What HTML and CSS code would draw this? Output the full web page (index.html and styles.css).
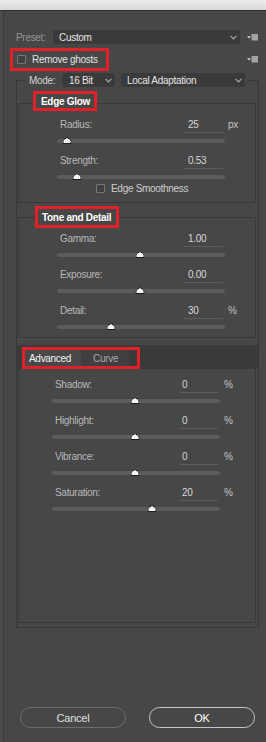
FILE: index.html
```html
<!DOCTYPE html>
<html lang="en">
<head>
<meta charset="utf-8">
<title>HDR Toning</title>
<link rel="stylesheet" href="styles.css">
</head>
<body>
<div class="titlebar"></div>
<div class="dialog">
  <div class="row preset-row">
    <span class="preset-label">Preset:</span>
    <div class="select select-preset"><span>Custom</span><svg class="chev" width="7" height="5" viewBox="0 0 7 5"><polyline points="0.6,0.8 3.5,3.8 6.4,0.8"/></svg></div>
    <svg class="menu-icon" width="11" height="7" viewBox="0 0 11 7"><polygon class="mi-tri" points="0,2.2 4,2.2 2,4.6"/><rect class="mi-sq" x="4.5" y="0" width="6.5" height="6.5"/></svg>
  </div>

  <div class="row ghost-row">
    <div class="mark ghost-mark"><span class="check"></span><span class="ghost-text">Remove ghosts</span></div>
    <svg class="menu-icon" width="11" height="7" viewBox="0 0 11 7"><polygon class="mi-tri" points="0,2.2 4,2.2 2,4.6"/><rect class="mi-sq" x="4.5" y="0" width="6.5" height="6.5"/></svg>
  </div>

  <div class="method-box">
    <div class="mode-row">
      <span class="mode-label">Mode:</span>
      <div class="select select-bit"><span>16 Bit</span><svg class="chev" width="7" height="5" viewBox="0 0 7 5"><polyline points="0.6,0.8 3.5,3.8 6.4,0.8"/></svg></div>
      <div class="select select-method"><span>Local Adaptation</span><svg class="chev" width="7" height="5" viewBox="0 0 7 5"><polyline points="0.6,0.8 3.5,3.8 6.4,0.8"/></svg></div>
    </div>

    <div class="group edge-group">
      <div class="mark group-title edge-title">Edge Glow</div>
      <div class="param">
        <div class="line"><span class="lbl">Radius:</span><span class="val">25</span><span class="unit">px</span></div>
        <div class="track"><svg class="thumb" style="left:6%" width="9" height="7" viewBox="0 0 9 7"><path d="M0.5 6.5 V4.3 Q0.5 3.2 1.8 2.3 L4.5 0.5 L7.2 2.3 Q8.5 3.2 8.5 4.3 V6.5 Z"/></svg></div>
      </div>
      <div class="param param-last">
        <div class="line"><span class="lbl">Strength:</span><span class="val">0.53</span></div>
        <div class="track"><svg class="thumb" style="left:12%" width="9" height="7" viewBox="0 0 9 7"><path d="M0.5 6.5 V4.3 Q0.5 3.2 1.8 2.3 L4.5 0.5 L7.2 2.3 Q8.5 3.2 8.5 4.3 V6.5 Z"/></svg></div>
      </div>
      <div class="smooth-row"><span class="check"></span><span class="smooth-text">Edge Smoothness</span></div>
    </div>

    <div class="group tone-group">
      <div class="mark group-title tone-title">Tone and Detail</div>
      <div class="param">
        <div class="line"><span class="lbl">Gamma:</span><span class="val">1.00</span></div>
        <div class="track"><svg class="thumb" style="left:49.4%" width="9" height="7" viewBox="0 0 9 7"><path d="M0.5 6.5 V4.3 Q0.5 3.2 1.8 2.3 L4.5 0.5 L7.2 2.3 Q8.5 3.2 8.5 4.3 V6.5 Z"/></svg></div>
      </div>
      <div class="param">
        <div class="line"><span class="lbl">Exposure:</span><span class="val">0.00</span></div>
        <div class="track"><svg class="thumb" style="left:49.4%" width="9" height="7" viewBox="0 0 9 7"><path d="M0.5 6.5 V4.3 Q0.5 3.2 1.8 2.3 L4.5 0.5 L7.2 2.3 Q8.5 3.2 8.5 4.3 V6.5 Z"/></svg></div>
      </div>
      <div class="param param-end">
        <div class="line"><span class="lbl">Detail:</span><span class="val">30</span><span class="unit">%</span></div>
        <div class="track"><svg class="thumb" style="left:32%" width="9" height="7" viewBox="0 0 9 7"><path d="M0.5 6.5 V4.3 Q0.5 3.2 1.8 2.3 L4.5 0.5 L7.2 2.3 Q8.5 3.2 8.5 4.3 V6.5 Z"/></svg></div>
      </div>
    </div>

    <div class="tabbar">
      <div class="mark tabs"><span class="tab tab-active">Advanced</span><span class="tab tab-curve">Curve</span></div>
    </div>
    <div class="tabpanel">
      <div class="param adv">
        <div class="line"><span class="lbl">Shadow:</span><span class="val">0</span><span class="unit">%</span></div>
        <div class="track"><svg class="thumb" style="left:49.4%" width="9" height="7" viewBox="0 0 9 7"><path d="M0.5 6.5 V4.3 Q0.5 3.2 1.8 2.3 L4.5 0.5 L7.2 2.3 Q8.5 3.2 8.5 4.3 V6.5 Z"/></svg></div>
      </div>
      <div class="param adv">
        <div class="line"><span class="lbl">Highlight:</span><span class="val">0</span><span class="unit">%</span></div>
        <div class="track"><svg class="thumb" style="left:49.4%" width="9" height="7" viewBox="0 0 9 7"><path d="M0.5 6.5 V4.3 Q0.5 3.2 1.8 2.3 L4.5 0.5 L7.2 2.3 Q8.5 3.2 8.5 4.3 V6.5 Z"/></svg></div>
      </div>
      <div class="param adv">
        <div class="line"><span class="lbl">Vibrance:</span><span class="val">0</span><span class="unit">%</span></div>
        <div class="track"><svg class="thumb" style="left:49.4%" width="9" height="7" viewBox="0 0 9 7"><path d="M0.5 6.5 V4.3 Q0.5 3.2 1.8 2.3 L4.5 0.5 L7.2 2.3 Q8.5 3.2 8.5 4.3 V6.5 Z"/></svg></div>
      </div>
      <div class="param adv">
        <div class="line"><span class="lbl">Saturation:</span><span class="val">20</span><span class="unit">%</span></div>
        <div class="track"><svg class="thumb" style="left:59.5%" width="9" height="7" viewBox="0 0 9 7"><path d="M0.5 6.5 V4.3 Q0.5 3.2 1.8 2.3 L4.5 0.5 L7.2 2.3 Q8.5 3.2 8.5 4.3 V6.5 Z"/></svg></div>
      </div>
    </div>
  </div>

  <div class="buttons">
    <button class="btn btn-cancel">Cancel</button>
    <button class="btn btn-ok">OK</button>
  </div>
</div>
</body>
</html>
```

FILE: styles.css
```css
* { box-sizing: border-box; }
html, body { margin: 0; padding: 0; }
body {
  width: 266px;
  height: 742px;
  overflow: hidden;
  background: linear-gradient(to right, #4b4b4b 0, #4b4b4b 3px, #383838 3px, #383838 4px, #474747 4px);
  font-family: "Liberation Sans", Arial, sans-serif;
  font-size: 10px;
  letter-spacing: -0.3px;
  color: #bcbcbc;
}

.titlebar {
  height: 11px;
  background: linear-gradient(#ececec, #dadada);
  border-bottom: 1px solid #2c2c2c;
}

.dialog { display: block; }

.row { display: flex; align-items: center; }

.mark {
  border: 3px solid #e3202a;
  background: #474747;
}

/* Preset */
.preset-row { margin-top: 19px; height: 14px; padding-left: 16px; }
.preset-label { width: 37px; color: #959595; }
.select {
  display: flex;
  align-items: center;
  justify-content: space-between;
  height: 14px;
  background: #3a3a3a;
  border-radius: 2px;
  color: #e4e4e4;
  padding: 0 3px 0 6px;
}
.select-preset { width: 187px; }
.chev { display: block; }
.chev polyline { fill: none; stroke: #a9a9a9; stroke-width: 1.2; }

.menu-icon { display: block; margin-left: auto; margin-right: 8px; }
.preset-row .menu-icon { margin-left: 7px; }
.mi-tri { fill: #d8d8d8; }
.mi-sq { fill: #a3a3a3; }

/* Remove ghosts */
.ghost-row { margin-top: 4px; }
.ghost-mark {
  display: flex;
  align-items: center;
  margin-left: 10px;
  width: 99px;
  height: 23px;
  padding-left: 4px;
}
.check {
  display: block;
  width: 9px;
  height: 9px;
  border: 1px solid #777;
  border-radius: 1px;
  background: #404040;
  flex: none;
}
.ghost-text { margin-left: 6px; color: #e2e2e2; font-size: 10px; }

/* Method box */
.method-box {
  margin-top: 9px;
  margin-left: 16px;
  width: 243px;
  border: 1px solid #383838;
  padding-bottom: 4px;
}
.mode-row {
  display: flex;
  align-items: center;
  margin-top: -8px;
  margin-left: 8px;
  width: 224px;
  height: 14px;
  background: #474747;
}
.mode-label { width: 37px; padding-left: 4px; color: #d2d2d2; }
.select-bit { width: 53px; padding-left: 7px; }
.select-method { width: 124px; margin-left: 6px; }

/* Groups */
.group {
  margin-left: 1px;
  width: 238px;
  border: 1px solid #393939;
}
.edge-group { margin-top: 16px; padding-bottom: 7px; }
.tone-group { margin-top: 14px; }

.group-title {
  display: flex;
  align-items: center;
  color: #ffffff;
  font-weight: bold;
  font-size: 10px;
}
.edge-title { margin-top: -13px; margin-left: 14px; width: 64px; height: 20px; padding-left: 5px; margin-bottom: 7px; }
.tone-title { margin-top: -12px; margin-left: 16px; width: 84px; height: 22px; padding-left: 4px; margin-bottom: 4px; }

/* Params */
.line { display: flex; align-items: flex-start; height: 15px; margin-left: 41px; line-height: 14px; }
.lbl { width: 124px; color: #b8b8b8; }
.val {
  width: 39px;
  height: 15px;
  border-bottom: 1px solid #5c5c5c;
  padding-left: 4px;
  color: #d6d6d6;
}
.unit { margin-left: 5px; color: #c4c4c4; }

.track {
  position: relative;
  margin: 6px 0 11px 38px;
  width: 168px;
  height: 4px;
  border-radius: 2px;
  background: #5c5c5c;
}
.param-last .track { margin-bottom: 2px; }
.param-end .track { margin-bottom: 8px; }
.thumb {
  position: absolute;
  top: -2px;
  transform: translateX(-50%);
  display: block;
}
.thumb path { fill: #f4f4f4; stroke: #1c1c1c; stroke-width: 1; }

.smooth-row {
  display: flex;
  align-items: center;
  height: 14px;
  margin-top: 2px;
  margin-left: 77px;
}
.smooth-text { margin-left: 6px; color: #cfcfcf; }

/* Tabs */
.tabbar {
  margin-top: 7px;
  height: 24px;
  background: #3a3a3a;
  padding-top: 2px;
  padding-left: 5px;
}
.tabs {
  display: flex;
  width: 118px;
  height: 22px;
  background: #3a3a3a;
}
.tab { display: flex; align-items: center; height: 16px; }
.tab-active { width: 56px; padding-left: 4px; background: #484848; color: #f4f4f4; }
.tab-curve { width: 48px; padding-left: 12px; background: #404040; color: #a8a8a8; }

.tabpanel {
  margin-left: 1px;
  width: 238px;
  height: 254px;
  border: 1px solid #393939;
  border-top: none;
  padding-top: 9px;
}
.adv .line { margin-left: 36px; }
.adv .lbl { width: 125px; }
.adv .val { width: 38px; padding-left: 2px; }
.adv .unit { margin-left: 6px; }
.adv .track { margin-left: 33px; }

/* Buttons */
.buttons {
  display: flex;
  gap: 23px;
  margin-top: 79px;
  padding-left: 20px;
}
.btn {
  width: 106px;
  height: 21px;
  border-radius: 11px;
  background: transparent;
  font-family: "Liberation Sans", Arial, sans-serif;
  font-size: 11px;
  letter-spacing: -0.2px;
  padding: 0;
}
.btn-cancel { border: 1px solid #6c6c6c; color: #e0e0e0; }
.btn-ok { border: 1.5px solid #c6c6c6; color: #ffffff; }
```
